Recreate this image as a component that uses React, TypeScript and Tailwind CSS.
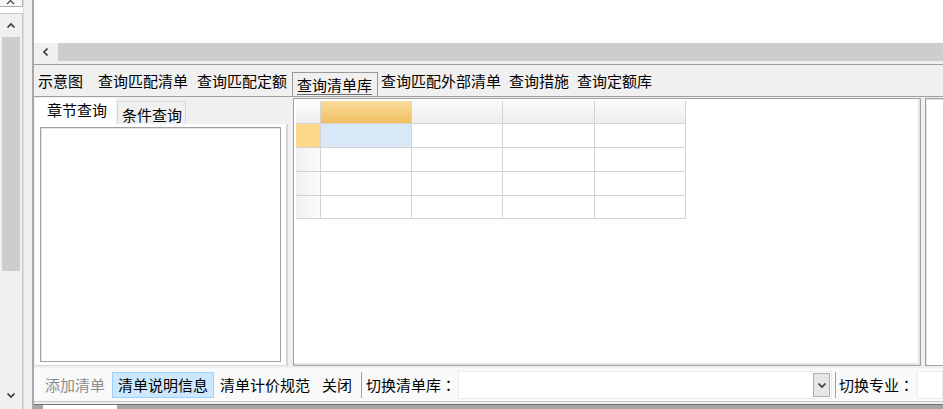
import type { ReactNode } from "react";

const mainTabs = [
  { label: "示意图", w: "w-[60px]" },
  { label: "查询匹配清单", w: "w-[99px]" },
  { label: "查询匹配定额", w: "w-[95px]" },
  { label: "查询清单库", w: "w-[86px]", active: true },
  { label: "查询匹配外部清单", w: "w-[131px]", pad: "pl-[3px]" },
  { label: "查询措施", w: "w-[68px]" },
  { label: "查询定额库", w: "w-[80px]" },
];

function Chevron({ dir }: { dir: "up" | "down" | "left" }) {
  const d = {
    up: "M1.5 6.5 L5 3 L8.5 6.5",
    down: "M1.5 3.5 L5 7 L8.5 3.5",
    left: "M6.5 1.5 L3 5 L6.5 8.5",
  }[dir];
  return (
    <svg width="10" height="10" viewBox="0 0 10 10">
      <path d={d} fill="none" stroke="#3c3c3c" strokeWidth="1.7" />
    </svg>
  );
}

function Cell({ className, children }: { className: string; children?: ReactNode }) {
  return <div className={`border-r-[1.5px] border-b-[1.5px] border-[#d3d3d3] ${className}`}>{children}</div>;
}

// colon drawn with the TC face so it sits centred in its em box, as on the screenshot
function Colon() {
  return <span className="font-['Noto_Sans_CJK_TC',sans-serif]">：</span>;
}

function DataGrid() {
  const rows = [0, 1, 2, 3];
  const dataCols = [0, 1, 2, 3];
  return (
    <div className="grid grid-cols-[25px_91px_91px_92px_91px] grid-rows-[23px_24px_24px_24px_23px]">
      <Cell className="bg-gradient-to-b from-[#fdfdfd] to-[#ededed]" />
      {dataCols.map((c) =>
        c === 0 ? (
          <Cell key={c} className="bg-gradient-to-b from-[#fadc9f] to-[#f1bf5f]" />
        ) : (
          <Cell key={c} className="bg-gradient-to-b from-[#fbfbfb] to-[#eeeeee]" />
        )
      )}
      {rows.map((r) => (
        <div key={r} className="contents">
          {r === 0 ? (
            <Cell className="bg-[#fdd78c]" />
          ) : (
            <Cell className="bg-gradient-to-r from-[#f0f0f0] to-[#fcfcfc]" />
          )}
          {dataCols.map((c) => (
            <Cell key={c} className={r === 0 && c === 0 ? "bg-[#d9e8f6]" : "bg-white"} />
          ))}
        </div>
      ))}
    </div>
  );
}

export default function App() {
  return (
    <div className="flex h-[409px] w-[943px] overflow-hidden bg-[#f0f0f0] font-['Noto_Sans_CJK_SC',sans-serif] text-[15px] leading-none text-[#000]">
      {/* left strip with the outer vertical scrollbar */}
      <div className="flex w-[34px] shrink-0">
        <div className="flex w-[23px] flex-col bg-white">
          <div className="flex h-[7px] justify-center overflow-hidden border-r border-b border-[#adadad] bg-[#f7f7f7]">
            <svg width="10" height="7" viewBox="0 0 10 7">
              <path d="M1 -3 L8 4 M8 -3 L1 4" stroke="#444" strokeWidth="1.2" />
            </svg>
          </div>
          <div className="mt-[6px] flex flex-1 flex-col border-t border-r border-[#c8c8c8] bg-[#f0f0f0] px-[2px]">
            <div className="flex h-[23px] items-center justify-center">
              <Chevron dir="up" />
            </div>
            <div className="h-[234px] bg-[#cdcdcd]" />
            <div className="flex-1" />
            <div className="mb-[3px] flex h-[22px] items-center justify-center">
              <Chevron dir="down" />
            </div>
          </div>
        </div>
        <div className="flex-1 border-l border-[#dadada] border-r-2 border-r-[#a8a8a8]" />
      </div>

      {/* main area */}
      <div className="flex min-w-0 flex-1 flex-col">
        <div className="h-[43px] shrink-0 bg-white" />
        <div className="flex h-[18px] shrink-0">
          <div className="flex w-[24px] items-center justify-center bg-[#f0f0f0]">
            <Chevron dir="left" />
          </div>
          <div className="flex-1 bg-[#cdcdcd]" />
        </div>
        <div className="h-[4px] shrink-0 border-b border-[#a0a0a0]" />

        {/* top tabs */}
        <div className="flex h-[32px] shrink-0 items-start border-b border-[#a0a0a0] pl-[4px]">
          {mainTabs.map((t) =>
            t.active ? (
              <div
                key={t.label}
                className={`mt-[7px] h-[24px] shrink-0 border border-b-0 border-[#9a9a9a] pl-[4px] pt-[3px] ${t.w}`}
              >
                <span className="inline-block border-b border-[#6a6a6a] pb-[1px] leading-[17px]">{t.label}</span>
              </div>
            ) : (
              <div key={t.label} className={`mt-[6px] h-[20px] shrink-0 leading-[20px] whitespace-nowrap ${t.pad ?? ""} ${t.w}`}>
                {t.label}
              </div>
            )
          )}
        </div>

        {/* panels */}
        <div className="flex h-[269px] shrink-0 pt-[1px]">
          <div className="ml-[1px] flex w-[253px] shrink-0 flex-col">
            <div className="flex h-[26px] shrink-0 items-end">
              <div className="flex h-[26px] w-[81px] items-center bg-white pl-[12px] pb-[3px]">章节查询</div>
              <div className="ml-[1px] flex h-[23px] w-[69px] items-center border border-b-0 border-[#d9d9d9] bg-[#f0f0f0] pl-[4px] pt-[2px]">
                条件查询
              </div>
            </div>
            <div className="flex flex-1 flex-col border-r-2 border-b border-[#d6d6d6] bg-white px-[5px] pt-[3px] pb-[3px]">
              <div className="flex-1 border border-[#a0a0a0] bg-white shadow-[inset_1px_1px_0_#e6e6e6]" />
            </div>
          </div>

          <div className="ml-[5px] w-[628px] shrink-0 border border-[#a0a0a0] bg-white p-[2px] shadow-[inset_-2px_-2px_0_#e3e3e3]">
            <DataGrid />
          </div>

          <div className="ml-[4px] flex-1 border-y border-l border-[#a0a0a0] bg-white shadow-[inset_1px_1px_0_#e3e3e3]" />
        </div>

        <div className="h-[2px] shrink-0" />

        {/* bottom toolbar */}
        <div className="flex h-[33px] shrink-0 items-center whitespace-nowrap bg-[#f9f9f9] pl-[11px]">
          <span className="w-[60px] text-[#8c8c8c]">添加清单</span>
          <span className="ml-[7px] flex h-[26px] items-center border border-[#99d1ff] bg-[#cce8ff] px-[5px]">清单说明信息</span>
          <span className="ml-[6px]">清单计价规范</span>
          <span className="ml-[12px]">关闭</span>
          <span className="ml-[9px] h-[26px] w-px bg-[#a0a0a0]" />
          <span className="ml-[4px] w-[90px]">
            切换清单库
            <Colon />
          </span>
          <div className="ml-[2px] flex h-[28px] w-[374px] items-center justify-end border border-[#ececec] bg-white pr-[1px]">
            <div className="flex h-[24px] w-[17px] items-center justify-center border border-[#adadad] bg-[#e6e6e6]">
              <Chevron dir="down" />
            </div>
          </div>
          <span className="ml-[3px] h-[26px] w-px bg-[#a0a0a0]" />
          <span className="ml-[3px] w-[75px]">
            切换专业
            <Colon />
          </span>
          <div className="ml-[3px] h-[28px] flex-1 border border-[#ececec] bg-white" />
        </div>

        {/* bottom edge */}
        <div className="flex h-[8px] shrink-0 flex-col">
          <div className="h-[3px] border-t border-[#c8c8c8] bg-[#f0f0f0]" />
          <div className="flex flex-1 border-t border-[#707070] bg-[#a6a6a6]">
            <div className="ml-[9px] w-[74px] bg-white" />
          </div>
        </div>
      </div>
    </div>
  );
}
